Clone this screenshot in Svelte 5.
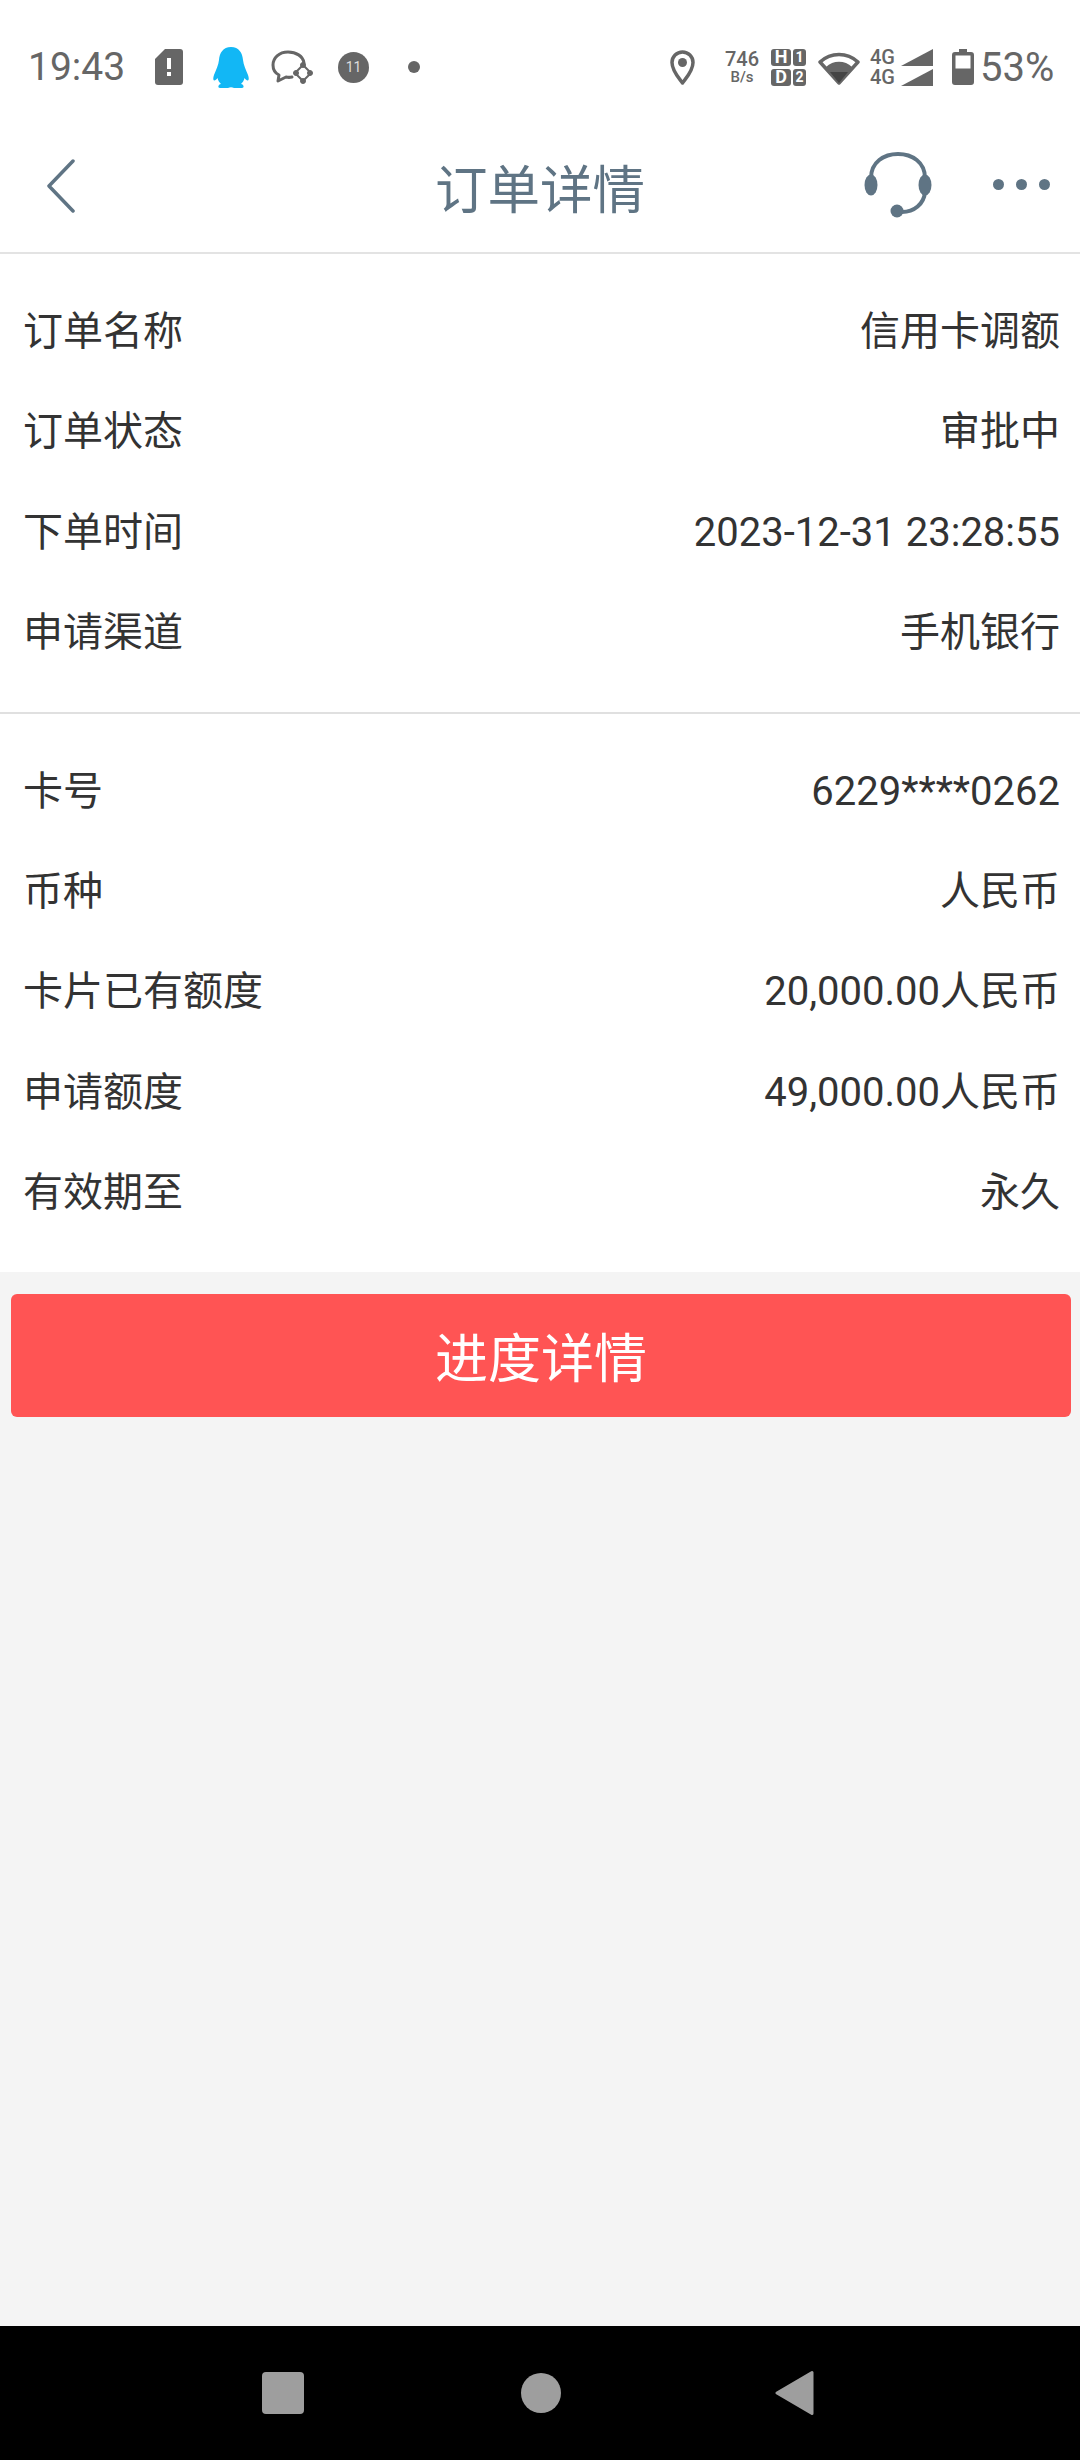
<script>
	const orderRows = [
		['订单名称', '信用卡调额'],
		['订单状态', '审批中'],
		['下单时间', '2023-12-31 23:28:55'],
		['申请渠道', '手机银行']
	];
	const cardRows = [
		['卡号', '6229****0262'],
		['币种', '人民币'],
		['卡片已有额度', '20,000.00人民币'],
		['申请额度', '49,000.00人民币'],
		['有效期至', '永久']
	];
</script>

<div class="page">
	<div class="status">
		<span class="time">19:43</span>
		<svg class="sim" width="28" height="36" viewBox="0 0 28 36">
			<path d="M10 0H25a3 3 0 0 1 3 3V33a3 3 0 0 1-3 3H3a3 3 0 0 1-3-3V10Z" fill="#666" />
			<rect x="12" y="9" width="4" height="11" fill="#fff" />
			<rect x="12" y="23" width="4" height="4" fill="#fff" />
		</svg>
		<svg class="qq" width="36" height="41" viewBox="0 0 36 41">
			<path d="M18 0C10 0 6.500 6 6 13C5.500 18 3 23 1 28C0 31 0 33 1 33.500C2 33.800 3.500 32.500 4.500 31C5 33.500 6.500 35.500 8 37C5 37.500 4.500 41 7 41H15C17 40 19 40 21 41H29C31.500 41 31 37.500 28 37C29.500 35.500 31 33.500 31.500 31C32.500 32.500 34 33.800 35 33.500C36 33 36 31 35 28C33 23 30.500 18 30 13C29.500 6 26 0 18 0Z" fill="#12b7f5" />
		</svg>
		<svg class="chat" width="42" height="34" viewBox="0 0 42 34" fill="none" stroke="#666">
			<path d="M33 13C32 6 25 2 17 2C8 2 2 8 2 15C2 20 4 23 8 25L7 31L15 27C17 27.500 19 27.500 21 27" stroke-width="3" stroke-linecap="round" stroke-linejoin="round" />
			<path d="M32 15L40 23L32 31L24 23Z" stroke-width="2" />
			<circle cx="32" cy="15" r="2.500" fill="#666" />
			<circle cx="39" cy="23" r="2.500" fill="#666" />
			<circle cx="32" cy="31" r="2.500" fill="#666" />
			<circle cx="25" cy="23" r="2.500" fill="#666" />
		</svg>
		<span class="badge">11</span>
		<span class="dot"></span>
		<svg class="pin" width="25" height="35" viewBox="0 0 25 35">
			<path d="M12.500 33C9 28 2 21 2 12.500a10.500 10.500 0 0 1 21 0C23 21 16 28 12.500 33Z" fill="none" stroke="#666" stroke-width="3.500" stroke-linejoin="round" />
			<circle cx="12.500" cy="12.500" r="4.500" fill="#666" />
		</svg>
		<div class="speed"><span>746</span><span class="unit">B/s</span></div>
		<div class="hd">
			<span class="big">H</span><span class="num">1</span>
			<span class="big">D</span><span class="num">2</span>
		</div>
		<svg class="wifi" width="42" height="35" viewBox="0 0 42 35">
			<path d="M21 33L2 12C13 2 29 2 40 12Z" fill="none" stroke="#666" stroke-width="3.500" stroke-linejoin="round" />
			<path d="M21 33L8 17C15 10 27 10 34 17Z" fill="#666" />
			<path d="M21 33L12 22H30Z" fill="#444" />
		</svg>
		<div class="net">
			<div class="line"><span>4G</span><svg width="32" height="17" viewBox="0 0 32 17"><path d="M0 17L32 0V17Z" fill="#666" /></svg></div>
			<div class="line"><span>4G</span><svg width="32" height="17" viewBox="0 0 32 17"><path d="M0 17L32 0V17Z" fill="#666" /></svg></div>
		</div>
		<svg class="battery" width="22" height="36" viewBox="0 0 22 36">
			<path d="M7 0H15V3H19a3 3 0 0 1 3 3V33a3 3 0 0 1-3 3H3a3 3 0 0 1-3-3V6a3 3 0 0 1 3-3H7Z" fill="#666" />
			<rect x="3.500" y="6.500" width="15" height="13" fill="#fff" />
		</svg>
		<span class="percent">53%</span>
	</div>

	<header>
		<svg class="back" width="30" height="54" viewBox="0 0 30 54">
			<path d="M27 2L3 27L27 52" fill="none" stroke="#5f7484" stroke-width="3.500" stroke-linecap="round" stroke-linejoin="round" />
		</svg>
		<h1>订单详情</h1>
		<svg class="headset" width="68" height="66" viewBox="0 0 68 66" fill="none">
			<path d="M7 26C7 10 20 2 34 2C48 2 61 10 61 26" stroke="#5f7484" stroke-width="4" />
			<path d="M61 40C60 52 50 60 38 60" stroke="#5f7484" stroke-width="4" />
			<ellipse cx="7" cy="33" rx="6.500" ry="10.500" fill="#5f7484" />
			<ellipse cx="61" cy="33" rx="6.500" ry="10.500" fill="#5f7484" />
			<circle cx="33" cy="59" r="6.500" fill="#5f7484" />
		</svg>
		<div class="dots"><i></i><i></i><i></i></div>
	</header>

	<section class="first">
		{#each orderRows as row}
			<div class="row"><span>{row[0]}</span><span>{row[1]}</span></div>
		{/each}
	</section>
	<section class="second">
		{#each cardRows as row}
			<div class="row"><span>{row[0]}</span><span>{row[1]}</span></div>
		{/each}
	</section>

	<div class="action">
		<button>进度详情</button>
	</div>

	<nav>
		<span class="square"></span>
		<span class="circle"></span>
		<svg width="40" height="46" viewBox="0 0 40 46">
			<path d="M37 2.500V43.500L2 23Z" fill="#9e9e9e" stroke="#9e9e9e" stroke-width="3" stroke-linejoin="round" />
		</svg>
	</nav>
</div>

<style>
	:global(body) {
		margin: 0;
		background: #f4f4f4;
	}
	.page {
		width: 1080px;
		height: 2460px;
		display: flex;
		flex-direction: column;
		background: #f4f4f4;
		font-family: Roboto, 'Noto Sans CJK SC', sans-serif;
		color: #333;
	}
	.status {
		height: 120px;
		box-sizing: border-box;
		padding: 14px 0 0 28px;
		background: #fff;
		display: flex;
		align-items: center;
		color: #666;
		flex: none;
	}
	.status svg {
		flex: none;
	}
	.time {
		font-size: 39px;
		width: 97px;
		white-space: nowrap;
	}
	.sim {
		margin-left: 30px;
	}
	.qq {
		margin-left: 30px;
	}
	.chat {
		margin-left: 22px;
	}
	.badge {
		margin-left: 25px;
		width: 31px;
		height: 31px;
		border-radius: 50%;
		background: #666;
		color: #ddd;
		font-size: 14px;
		display: flex;
		align-items: center;
		justify-content: center;
	}
	.dot {
		margin-left: 39px;
		width: 12px;
		height: 12px;
		border-radius: 50%;
		background: #666;
	}
	.pin {
		margin-left: 250px;
	}
	.speed {
		margin-left: 29px;
		width: 36px;
		display: flex;
		flex-direction: column;
		align-items: center;
		font-size: 20px;
		font-weight: 500;
		line-height: 20px;
	}
	.unit {
		font-size: 15px;
		line-height: 16px;
	}
	.hd {
		margin-left: 11px;
		width: 35px;
		display: grid;
		grid-template-columns: 20px 13px;
		gap: 3px 2px;
	}
	.hd span {
		height: 17px;
		background: #666;
		color: #fff;
		border-radius: 3px;
		display: flex;
		align-items: center;
		justify-content: center;
		font-size: 14px;
		line-height: 1;
		font-weight: 700;
	}
	.hd .big {
		font-size: 18px;
	}
	.wifi {
		margin-left: 12px;
	}
	.net {
		margin-left: 10px;
		width: 63px;
		display: flex;
		flex-direction: column;
		gap: 3px;
		font-size: 20px;
		line-height: 17px;
		font-weight: 500;
	}
	.line {
		display: flex;
		justify-content: space-between;
		align-items: flex-end;
	}
	.battery {
		margin-left: 19px;
	}
	.percent {
		margin-left: 6px;
		font-size: 40px;
	}
	header {
		height: 134px;
		box-sizing: border-box;
		flex: none;
		background: #fff;
		border-bottom: 2px solid #e3e3e3;
		display: grid;
		grid-template-columns: 1fr auto 1fr;
		align-items: center;
		position: relative;
	}
	.back {
		margin-left: 46px;
		grid-column: 1;
	}
	h1 {
		grid-column: 2;
		margin: 0;
		font-size: 52.500px;
		font-weight: 400;
		line-height: 1;
		color: #5f7484;
		font-family: 'Noto Sans CJK SC', sans-serif;
	}
	.headset {
		position: absolute;
		left: 864px;
		top: 32px;
	}
	.dots {
		position: absolute;
		left: 993px;
		top: 59px;
		display: flex;
		gap: 12px;
	}
	.dots i {
		width: 11px;
		height: 11px;
		border-radius: 50%;
		background: #5f7484;
	}
	section {
		background: #fff;
		flex: none;
		font-size: 40px;
	}
	.first {
		padding: 24px 20px 32px 23px;
		border-bottom: 2px solid #e0e0e0;
	}
	.second {
		padding: 24px 20px 32px 23px;
	}
	.row {
		height: 100.400px;
		box-sizing: border-box;
		padding-top: 21px;
		display: flex;
		justify-content: space-between;
		align-items: baseline;
		white-space: nowrap;
	}
	.action {
		flex: 1;
		padding: 22px 9px 0 11px;
	}
	button {
		display: block;
		width: 100%;
		height: 123px;
		border: none;
		border-radius: 6px;
		background: #ff5454;
		color: #fff;
		font-family: 'Noto Sans CJK SC', sans-serif;
		font-size: 53px;
		padding: 0;
	}
	nav {
		height: 134px;
		flex: none;
		background: #000;
		display: flex;
		align-items: center;
		justify-content: center;
		gap: 214px;
		padding-right: 3px;
	}
	.square {
		width: 42px;
		height: 42px;
		border-radius: 4px;
		background: #9e9e9e;
	}
	.circle {
		width: 40px;
		height: 40px;
		margin-left: 3px;
		border-radius: 50%;
		background: #9e9e9e;
	}
</style>
